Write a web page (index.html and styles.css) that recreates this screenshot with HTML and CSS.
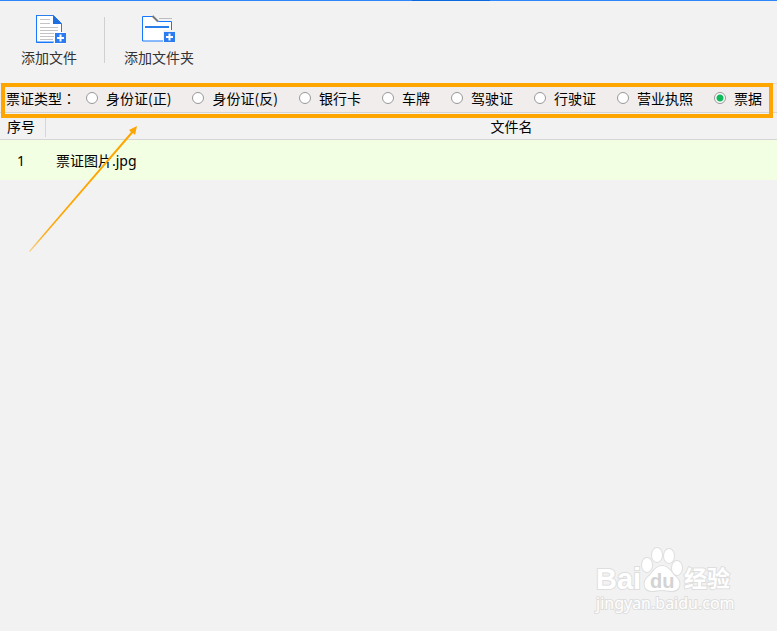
FILE: index.html
```html
<!DOCTYPE html>
<html lang="zh-CN">
<head>
<meta charset="utf-8">
<title>票证识别</title>
<link rel="stylesheet" href="styles.css">
</head>
<body>
<div class="accent"></div>
<header class="toolbar">
  <button class="tool" type="button">
    <svg class="tool-icon" width="34" height="32" viewBox="0 0 34 32" aria-hidden="true">
      <path d="M4.500 2.500h17l8 8v18.500h-25z" fill="#fff" stroke="#2b7de9"/>
      <path d="M4.500 2v27.500H21" fill="none" stroke="#1677ff" stroke-width="1"/>
      <path d="M21 2l9 9h-9z" fill="#1f6fe0"/>
      <path d="M8 6.500h10M8 10.500h10M8 14.500h18M8 17.500h18M8 20.500h18M8 23.500h14M8 26.500h13" stroke="#c4c4c4" stroke-width="1"/>
      <path d="M22 19h12v12H22z" fill="#fff"/>
      <path d="M23 20h11v10H23z" fill="#2b7cf0"/>
      <path d="M28.500 21.500v7M25 25h7" stroke="#fff" stroke-width="2"/>
    </svg>
    <span>添加文件</span>
  </button>
  <div class="divider"></div>
  <button class="tool" type="button">
    <svg class="tool-icon" width="34" height="32" viewBox="0 0 34 32" aria-hidden="true">
      <path d="M17 5.500h13" stroke="#bdbdbd"/>
      <path d="M.500 3.500h11l5 5h13v19.500H.500z" fill="#fff" stroke="#1677ff"/>
      <path d="M10.500 3l5.500 5.500" stroke="#777" stroke-width="2"/>
      <path d="M3 14h24" stroke="#2b7de9" stroke-width="2"/>
      <path d="M21 17h12v12H21z" fill="#f2f2f2"/>
      <path d="M23 19h10v10H22V19z" fill="#2b7cf0"/>
      <path d="M27.500 20.500v7M24 24h7" stroke="#fff" stroke-width="2"/>
    </svg>
    <span>添加文件夹</span>
  </button>
</header>

<main>
  <form class="filter">
    <span class="filter-title">票证类型<span class="colon" lang="zh-TW">：</span></span>
    <label class="option"><input type="radio" name="type">身份证(正)</label>
    <label class="option"><input type="radio" name="type">身份证(反)</label>
    <label class="option"><input type="radio" name="type">银行卡</label>
    <label class="option"><input type="radio" name="type">车牌</label>
    <label class="option"><input type="radio" name="type">驾驶证</label>
    <label class="option"><input type="radio" name="type">行驶证</label>
    <label class="option"><input type="radio" name="type">营业执照</label>
    <label class="option"><input type="radio" name="type" checked>票据</label>
    <span class="highlight"></span>
    <svg class="arrow" width="112" height="128" viewBox="0 0 112 128" aria-hidden="true">
      <defs>
        <linearGradient id="fade" x1="0" y1="1" x2="1" y2="0">
          <stop offset="0" stop-color="#ffa500" stop-opacity=".4"/>
          <stop offset=".15" stop-color="#ffa500" stop-opacity=".9"/>
          <stop offset=".3" stop-color="#ffa500"/>
        </linearGradient>
      </defs>
      <path d="M0 125L102 6l-2-2 8-4-2 9-2-2L1 126z" fill="url(#fade)"/>
    </svg>
  </form>

  <div class="list">
    <table>
      <thead>
        <tr><th class="col-no"><span>序号</span></th><th>文件名</th></tr>
      </thead>
      <tbody>
        <tr><td class="col-no">1</td><td class="file">票证图片.jpg</td></tr>
      </tbody>
    </table>
  </div>
</main>

<svg class="watermark" width="150" height="76" viewBox="0 0 150 76">
  <g class="outline">
    <text class="brand" x="5" y="46">Bai</text>
    <ellipse cx="56" cy="22" rx="5" ry="7"/>
    <ellipse cx="66" cy="12" rx="5" ry="7"/>
    <ellipse cx="78" cy="13" rx="5" ry="7"/>
    <ellipse cx="86" cy="25" rx="5" ry="7"/>
    <path d="M71 23c7 0 9 7 14 11 6 5 4 14-4 14-4 0-6-1-10-1s-6 1-10 1c-8 0-10-9-4-14 5-4 7-11 14-11z"/>
    <text class="exp" x="93" y="44">经验</text>
    <text class="site" x="5" y="66">jingyan.baidu.com</text>
  </g>
  <text class="du" x="59" y="45">du</text>
</svg>
</body>
</html>
```
FILE: styles.css
```css
* {
  box-sizing: border-box;
}

body {
  margin: 0;
  min-height: 100vh;
  position: relative;
  overflow: hidden;
  background: #f2f2f2;
  color: #000;
  font: 14px/20px "Noto Sans", "Noto Sans CJK SC", sans-serif;
}

.accent {
  height: 1px;
  background: linear-gradient(90deg, #2e87fa 53%, #0a68e0 53%, #0a68e0 63%, #2e87fa 63%);
}

.toolbar {
  display: flex;
  height: 82px;
  padding: 12px 21px;
}

.tool {
  display: flex;
  flex-direction: column;
  align-items: center;
  gap: 3px;
  padding: 0;
  border: 0;
  background: none;
  color: #333;
  font: inherit;
}

.divider {
  width: 1px;
  height: 46px;
  margin: 4px 19px 0 27px;
  background: #d0d0d0;
}

.filter {
  position: relative;
  display: flex;
  align-items: center;
  height: 30px;
  padding: 0 6px;
  border-top: 1px solid #ddd;
  border-bottom: 1px solid #d5d5d5;
  background: #f1edec;
  white-space: nowrap;
  font-family: "Noto Sans CJK SC", sans-serif;
}

.filter-title {
  margin-right: 10px;
}

.colon {
  font-family: "Noto Sans CJK TC", sans-serif;
}

.option {
  display: flex;
  align-items: center;
  gap: 8px;
  margin-right: 21px;
}

.option:last-of-type {
  margin-right: 0;
}

.option input {
  appearance: none;
  width: 12px;
  height: 12px;
  margin: 0;
  border: 1px solid #999;
  border-radius: 50%;
  background: #fff;
}

.option input:checked {
  background: radial-gradient(circle, #12b85c 3px, #fff 4px);
}

.highlight {
  position: absolute;
  top: -1px;
  right: 4px;
  bottom: -6px;
  left: 1px;
  border: 4px solid #ffa500;
  pointer-events: none;
}

.arrow {
  position: absolute;
  top: 42px;
  left: 29px;
  pointer-events: none;
}

.list {
  overflow: hidden;
}

/* The name column runs past the right edge of the window. */
table {
  width: calc(100% + 200px);
  table-layout: fixed;
  border-collapse: separate;
  border-spacing: 0;
}

th {
  height: 27px;
  padding: 2px 0 0;
  border-bottom: 1px solid #d5d5d5;
  font-weight: 400;
}

.col-no {
  width: 46px;
  padding-right: 4px;
  text-align: center;
}

th.col-no {
  padding-right: 0;
}

.col-no span {
  display: block;
  padding-right: 3px;
  border-right: 1px solid #d5d5d5;
}

td {
  height: 40px;
  padding: 2px 0 0;
  background: #f2ffe2;
}

.file {
  padding-left: 10px;
}

.watermark {
  position: absolute;
  right: 36px;
  bottom: 12px;
}

.outline {
  fill: #fff;
  stroke: #dedede;
  stroke-width: 2px;
  paint-order: stroke;
}

.brand {
  font: 700 29px "Liberation Sans", sans-serif;
}

.exp {
  font: 700 23px "Noto Sans CJK SC", sans-serif;
}

.site {
  font: 16px "Noto Sans", sans-serif;
}

.du {
  fill: #d3d3d3;
  font: 700 20px "Liberation Sans", sans-serif;
}
```
